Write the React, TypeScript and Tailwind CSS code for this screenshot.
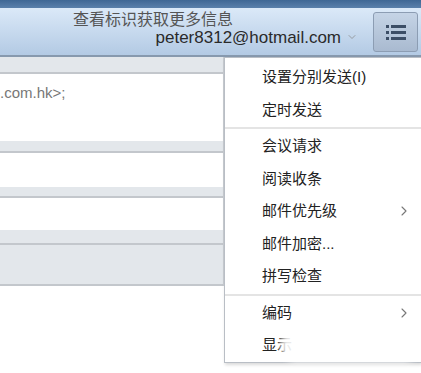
import { ChevronRight, ChevronDown } from "lucide-react";

const font = { fontFamily: '"Liberation Sans", "Noto Sans CJK SC", sans-serif' };

function MenuItem({ label, sub }: { label: string; sub?: boolean }) {
  return (
    <div className="flex h-[32.5px] items-center justify-between pl-[37px] pr-[9px] text-[15px] text-[#222]">
      <span>{label}</span>
      {sub && <ChevronRight className="h-[16px] w-[16px] text-[#777]" strokeWidth={1.6} />}
    </div>
  );
}

function Band({ h }: { h: string }) {
  return <div className={`${h} border-b-2 border-[#c3c7cc] bg-[#e3e7eb]`} />;
}

export default function App() {
  return (
    <div className="relative h-[373px] w-[421px] overflow-hidden bg-white" style={font}>
      <div className="h-[8px] bg-gradient-to-b from-[#3f6794] to-[#5a80ab]" />
      <header className="flex h-[49px] items-center justify-end border-b-2 border-[#8799ae] bg-gradient-to-b from-[#dbe9f8] to-[#b3cae4] pr-[3px]">
        <div className="mr-[15px] flex flex-col items-end leading-none">
          <span className="mr-[125px] -mt-[6px] text-[16px] text-[#555]">查看标识获取更多信息</span>
          <div className="mt-[1px] flex items-center gap-[5px]">
            <span className="text-[17px] text-[#2a2a2a]">peter8312@hotmail.com</span>
            <ChevronDown className="h-[12px] w-[12px] text-[#888]" strokeWidth={1.5} />
          </div>
        </div>
        <button className="flex h-[40px] w-[45px] items-center justify-center rounded-[3px] border border-[#8c9db3] bg-gradient-to-b from-[#c5d4e6] to-[#a9bad0]">
          <svg width="22" height="18" viewBox="0 0 22 18">
            <g fill="#3c4e66">
              <rect x="1" y="2" width="3" height="3" />
              <rect x="6" y="2" width="15" height="3" />
              <rect x="1" y="8" width="3" height="3" />
              <rect x="6" y="8" width="15" height="3" />
              <rect x="1" y="14" width="3" height="3" />
              <rect x="6" y="14" width="15" height="3" />
            </g>
          </svg>
        </button>
      </header>

      <div className="flex">
        <div className="w-[225px] border-r-2 border-[#c8ccd1]">
          <Band h="h-[17px]" />
          <div className="h-[67px] pt-[8px] text-[15px] text-[#777]">.com.hk&gt;;</div>
          <Band h="h-[12px]" />
          <div className="h-[34px]" />
          <Band h="h-[11px]" />
          <div className="h-[32px]" />
          <Band h="h-[15px]" />
          <Band h="h-[41px]" />
        </div>
        <div className="relative flex-1">
          <div className="absolute -left-[1px] top-0 w-[197px] border border-r-0 border-[#b9bec5] bg-white pt-[3px] shadow-[1px_2px_3px_rgba(0,0,0,0.15)]">
            <MenuItem label="设置分别发送(I)" />
            <MenuItem label="定时发送" />
            <div className="my-[1px] h-[2px] bg-[#e4e4e4]" />
            <MenuItem label="会议请求" />
            <MenuItem label="阅读收条" />
            <MenuItem label="邮件优先级" sub />
            <MenuItem label="邮件加密..." />
            <MenuItem label="拼写检查" />
            <div className="my-[1px] h-[2px] bg-[#e4e4e4]" />
            <MenuItem label="编码" sub />
            <MenuItem label="显示" />
          </div>
        </div>
      </div>

      <div className="absolute left-[280px] top-[328px] h-[34px] w-[140px] rounded-full bg-white opacity-90 blur-[3px]" />
    </div>
  );
}
